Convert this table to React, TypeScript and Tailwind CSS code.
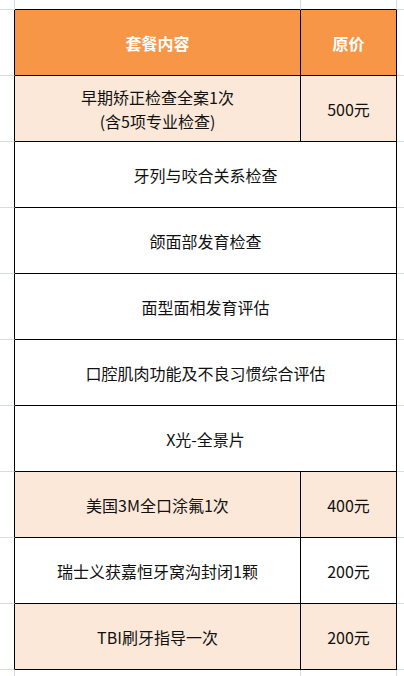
import React from 'react';

type Row = {
  item: React.ReactNode;
  price?: string;
  tone: 'head' | 'peach' | 'white';
};

const rows: Row[] = [
  { item: '套餐内容', price: '原价', tone: 'head' },
  {
    item: (
      <>
        早期矫正检查全案1次
        <br />
        (含5项专业检查)
      </>
    ),
    price: '500元',
    tone: 'peach',
  },
  { item: '牙列与咬合关系检查', tone: 'white' },
  { item: '颌面部发育检查', tone: 'white' },
  { item: '面型面相发育评估', tone: 'white' },
  { item: '口腔肌肉功能及不良习惯综合评估', tone: 'white' },
  { item: 'X光-全景片', tone: 'white' },
  { item: '美国3M全口涂氟1次', price: '400元', tone: 'peach' },
  { item: '瑞士义获嘉恒牙窝沟封闭1颗', price: '200元', tone: 'white' },
  { item: 'TBI刷牙指导一次', price: '200元', tone: 'peach' },
];

const toneClass = {
  head: 'bg-[#f79646] text-white font-bold',
  peach: 'bg-[#fce8d9] text-[#111]',
  white: 'bg-white text-[#111]',
};

export default function App() {
  return (
    <div
      className="grid h-[676px] w-[404px] grid-cols-[15px_286px_96px_1fr] grid-rows-[10px_repeat(10,66px)_1fr] overflow-hidden bg-white text-[16px] leading-6"
      style={{ fontFamily: '"Noto Sans CJK SC", "Noto Sans", sans-serif' }}
    >
      {/* top gutter row of the sheet */}
      <div className="border-r border-b border-[#d6dce6]" />
      <div className="border-r border-r-[#d6dce6] border-b border-b-black" />
      <div className="border-r border-r-[#d6dce6] border-b border-b-black" />
      <div className="border-b border-[#d6dce6]" />

      {rows.map((row, i) => (
        <React.Fragment key={i}>
          <div className="border-r border-r-black border-b border-b-[#d6dce6]" />
          {row.price ? (
            <>
              <div
                className={`flex items-center justify-center border-r border-b border-black text-center ${toneClass[row.tone]}`}
              >
                <span>{row.item}</span>
              </div>
              <div
                className={`flex items-center justify-center border-r border-b border-black text-center ${toneClass[row.tone]}`}
              >
                <span>{row.price}</span>
              </div>
            </>
          ) : (
            <div
              className={`col-span-2 flex items-center justify-center border-r border-b border-black text-center ${toneClass[row.tone]}`}
            >
              <span>{row.item}</span>
            </div>
          )}
          <div className="border-b border-[#d6dce6]" />
        </React.Fragment>
      ))}

      {/* bottom gutter row */}
      <div className="border-r border-[#d6dce6]" />
      <div className="border-r border-[#d6dce6]" />
      <div className="border-r border-[#d6dce6]" />
      <div />
    </div>
  );
}
